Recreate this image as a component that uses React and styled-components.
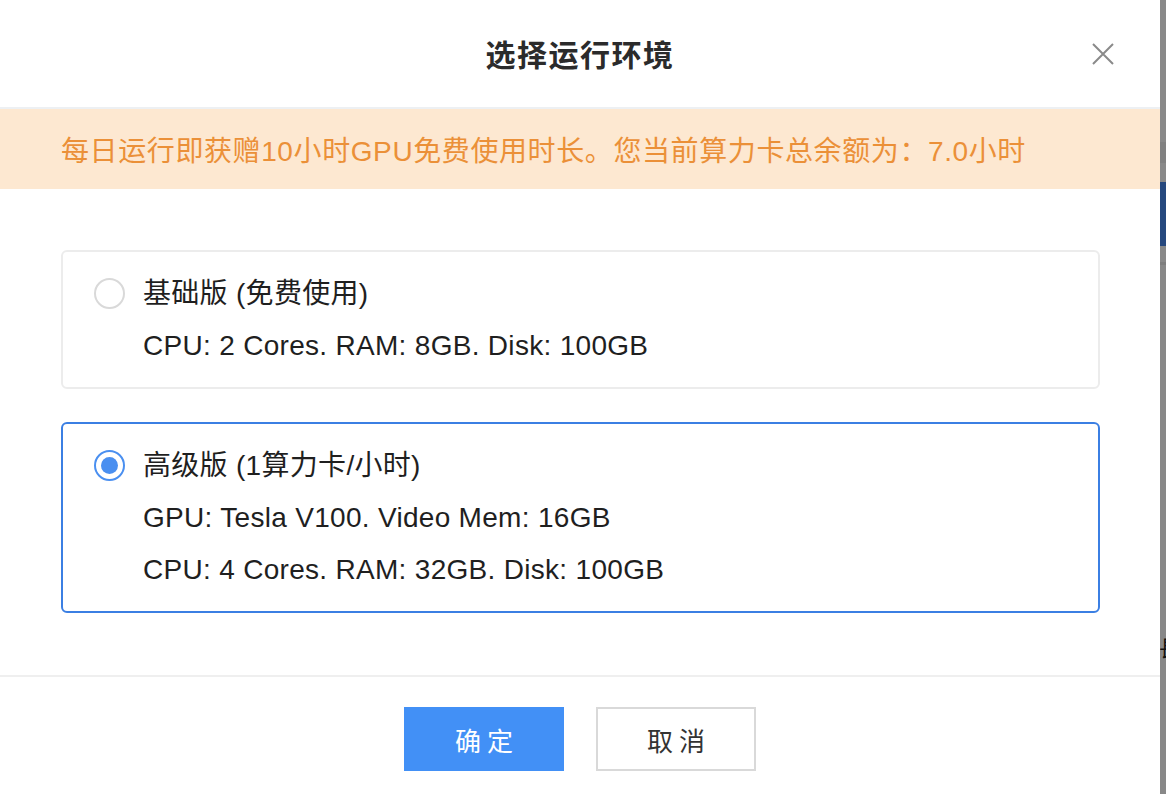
import styled, { createGlobalStyle } from "styled-components";

const GlobalStyle = createGlobalStyle`
  html, body {
    margin: 0;
    padding: 0;
    height: 794px;
    overflow: hidden;
    background: #888888;
  }
  * { box-sizing: border-box; }
`;

const Page = styled.div`
  display: flex;
  height: 794px;
  font-family: "Liberation Sans", "Noto Sans CJK SC", sans-serif;
`;

const Modal = styled.div`
  width: 1160px;
  height: 794px;
  background: #fff;
  display: flex;
  flex-direction: column;
`;

const Header = styled.div`
  position: relative;
  height: 109px;
  border-bottom: 2px solid #edf0f3;
  display: flex;
  align-items: center;
  justify-content: center;
  padding-bottom: 2px;
`;

const Title = styled.h2`
  margin: 0;
  font-size: 30px;
  font-weight: 600;
  color: #2b2b2b;
  letter-spacing: 1.5px;
`;

const Close = styled.button`
  position: absolute;
  right: 45px;
  top: 42px;
  width: 24px;
  height: 24px;
  padding: 0;
  border: none;
  background: none;
  cursor: pointer;
  display: flex;
  align-items: center;
  justify-content: center;
`;

const Banner = styled.div`
  height: 80px;
  background: #fde8d1;
  color: #eb9038;
  font-size: 28px;
  letter-spacing: 0.6px;
  display: flex;
  align-items: center;
  padding-left: 61px;
`;

const Body = styled.div`
  padding: 61px 60px 62px 61px;
  display: flex;
  flex-direction: column;
  gap: 33px;
  border-bottom: 2px solid #efefef;
`;

const Option = styled.div`
  border: 2px solid ${(p) => (p.$active ? "#3b7fe3" : "#ececec")};
  border-radius: 6px;
  padding: 16px 0 15px 31px;
  display: grid;
  grid-template-columns: 31px 1fr;
  column-gap: 18px;
  cursor: pointer;
`;

const Radio = styled.span`
  width: 31px;
  height: 31px;
  margin-top: 10px;
  border-radius: 50%;
  border: 2px solid ${(p) => (p.$checked ? "#4a8ff0" : "#d9d9d9")};
  display: flex;
  align-items: center;
  justify-content: center;
  &::after {
    content: "";
    display: ${(p) => (p.$checked ? "block" : "none")};
    width: 17px;
    height: 17px;
    border-radius: 50%;
    background: #4a8ff0;
  }
`;

const Lines = styled.div`
  display: flex;
  flex-direction: column;
`;

const Line = styled.div`
  font-size: 28px;
  line-height: 52px;
  letter-spacing: 0.3px;
  color: #1f1f1f;
  white-space: nowrap;
`;

const Footer = styled.div`
  padding-top: 30px;
  display: flex;
  justify-content: center;
  gap: 32px;
`;

const Button = styled.button`
  width: 160px;
  height: 64px;
  font-family: inherit;
  font-size: 26px;
  letter-spacing: 6px;
  text-indent: 6px;
  cursor: pointer;
  background: ${(p) => (p.$primary ? "#4290f6" : "#fff")};
  color: ${(p) => (p.$primary ? "#fff" : "#333")};
  border: 2px solid ${(p) => (p.$primary ? "#4290f6" : "#d9d9d9")};
  border-radius: 0;
`;

const Backdrop = styled.div`
  flex: 1;
  display: flex;
  flex-direction: column;
  overflow: hidden;
`;

const Stripe = styled.div`
  height: ${(p) => p.$h}px;
  background: ${(p) => p.$c};
  flex-shrink: 0;
`;

const StripGlyph = styled.div`
  margin-top: 370px;
  margin-left: -1px;
  font-size: 22px;
  line-height: 22px;
  color: #111;
  font-family: "Noto Sans CJK SC", sans-serif;
`;

const options = [
  {
    title: "基础版 (免费使用)",
    lines: ["CPU: 2 Cores. RAM: 8GB. Disk: 100GB"],
  },
  {
    title: "高级版 (1算力卡/小时)",
    lines: [
      "GPU: Tesla V100. Video Mem: 16GB",
      "CPU: 4 Cores. RAM: 32GB. Disk: 100GB",
    ],
    active: true,
  },
];

const App = () => {
  return (
    <Page>
      <GlobalStyle />
      <Modal>
        <Header>
          <Title>选择运行环境</Title>
          <Close aria-label="close">
            <svg width="22" height="22" viewBox="0 0 22 22">
              <path
                d="M1 1L21 21M21 1L1 21"
                stroke="#8a8a8a"
                strokeWidth="2"
                fill="none"
              />
            </svg>
          </Close>
        </Header>
        <Banner>每日运行即获赠10小时GPU免费使用时长。您当前算力卡总余额为：7.0小时</Banner>
        <Body>
          {options.map((o) => (
            <Option key={o.title} $active={o.active}>
              <Radio $checked={o.active} />
              <Lines>
                <Line>{o.title}</Line>
                {o.lines.map((l) => (
                  <Line key={l}>{l}</Line>
                ))}
              </Lines>
            </Option>
          ))}
        </Body>
        <Footer>
          <Button $primary>确定</Button>
          <Button>取消</Button>
        </Footer>
      </Modal>
      <Backdrop>
        <Stripe $h={142} $c="#898989" />
        <Stripe $h={21} $c="#818181" />
        <Stripe $h={19} $c="#898989" />
        <Stripe $h={64} $c="#26487e" />
        <Stripe $h={16} $c="#898989" />
        <Stripe $h={3} $c="#7e7e7e" />
        <StripGlyph>長</StripGlyph>
      </Backdrop>
    </Page>
  );
};

export default App;
